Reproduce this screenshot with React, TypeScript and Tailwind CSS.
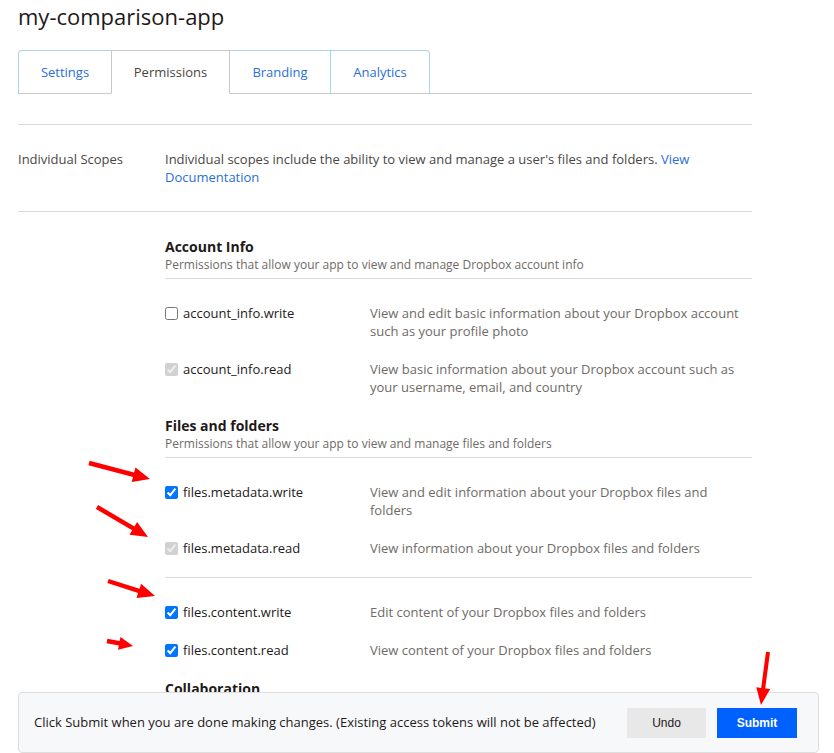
import React from "react";

type Arrow = { x1: number; y1: number; x2: number; y2: number; hl: number; hw: number; sw: number };

function arrowPts(a: Arrow) {
  const dx = a.x2 - a.x1;
  const dy = a.y2 - a.y1;
  const len = Math.hypot(dx, dy);
  const ux = dx / len;
  const uy = dy / len;
  const nx = -uy;
  const ny = ux;
  const bx = a.x2 - ux * a.hl;
  const by = a.y2 - uy * a.hl;
  const p = [
    [a.x1 + (nx * a.sw) / 2, a.y1 + (ny * a.sw) / 2],
    [bx + (nx * a.sw) / 2, by + (ny * a.sw) / 2],
    [bx + (nx * a.hw) / 2, by + (ny * a.hw) / 2],
    [a.x2, a.y2],
    [bx - (nx * a.hw) / 2, by - (ny * a.hw) / 2],
    [bx - (nx * a.sw) / 2, by - (ny * a.sw) / 2],
    [a.x1 - (nx * a.sw) / 2, a.y1 - (ny * a.sw) / 2],
  ];
  return p.map((q) => q.map((v) => v.toFixed(1)).join(",")).join(" ");
}

const arrows: Arrow[] = [
  { x1: 89, y1: 463, x2: 150, y2: 479, hl: 17, hw: 15, sw: 4.5 },
  { x1: 97, y1: 507, x2: 148, y2: 537, hl: 17, hw: 15, sw: 4.5 },
  { x1: 108, y1: 581, x2: 155, y2: 596, hl: 17, hw: 15, sw: 4.5 },
  { x1: 107, y1: 641, x2: 133, y2: 646, hl: 14, hw: 13, sw: 4.5 },
  { x1: 768, y1: 652, x2: 761, y2: 705, hl: 17, hw: 14, sw: 4 },
];

type Scope = { name: string; desc: string; checked: boolean; disabled: boolean };

function ScopeRow({ s }: { s: Scope }) {
  return (
    <div className="flex items-start">
      <label className="flex w-[205px] shrink-0 items-center gap-[5px] text-[13px] leading-[18px] text-[#1e1919]">
        <input
          type="checkbox"
          className="m-0 h-[13px] w-[13px] shrink-0"
          defaultChecked={s.checked}
          disabled={s.disabled}
        />
        <span>{s.name}</span>
      </label>
      <div className="w-[375px] text-[13px] leading-[18px] text-[#6f6a66]">{s.desc}</div>
    </div>
  );
}

function Section({
  title,
  subtitle,
  groups,
}: {
  title: string;
  subtitle: string;
  groups: Scope[][];
}) {
  return (
    <div className="mb-px">
      <div className="text-[14px] font-bold leading-[18px] text-[#1e1919]">{title}</div>
      <div className="pb-[5px] text-[12px] leading-[17px] text-[#6f6a66]">{subtitle}</div>
      {groups.map((g, gi) => (
        <div key={gi} className="border-t border-[#d9d9d9] pb-[20px] pt-[25px]">
          <div className="flex flex-col gap-[20px]">
            {g.map((s) => (
              <ScopeRow key={s.name} s={s} />
            ))}
          </div>
        </div>
      ))}
    </div>
  );
}

export default function App() {
  return (
    <div
      className="relative min-h-[900px] bg-white"
      style={{ fontFamily: '"Open Sans", "Noto Sans", sans-serif' }}
    >
      <div className="w-[752px] pl-[18px]">
        <h1 className="pt-[1px] text-[22px] leading-[30px] text-[#1e1919]">my-comparison-app</h1>
        <div className="mt-[19px] flex border-b border-[#c9c9c9] text-[13px]">
          <div className="flex h-[43px] w-[93px] items-center justify-center rounded-tl-[4px] border-l border-t border-[#a9d3f7] pt-[2px] text-[#2a6fd6]">
            Settings
          </div>
          <div className="-mb-px flex h-[44px] w-[119px] items-center justify-center border-x border-t border-b border-[#c9c9c9] border-b-white bg-white pt-[1px] text-[#4a4644]">
            Permissions
          </div>
          <div className="flex h-[43px] w-[100px] items-center justify-center border-t border-[#a9d3f7] pt-[2px] text-[#2a6fd6]">
            Branding
          </div>
          <div className="flex h-[43px] w-[100px] items-center justify-center rounded-tr-[4px] border-x border-t border-[#a9d3f7] pt-[2px] text-[#2a6fd6]">
            Analytics
          </div>
        </div>

        <div className="mt-[30px] border-t border-[#d9d9d9]">
          <div className="flex pb-[25px] pt-[25px] text-[13px] leading-[18px]">
            <div className="w-[147px] shrink-0 text-[#4a4644]">Individual Scopes</div>
            <div className="w-[560px] text-[#4a4644]">
              Individual scopes include the ability to view and manage a user's files and folders.{" "}
              <a className="text-[#2a6fd6]">View Documentation</a>
            </div>
          </div>
        </div>

        <div className="border-t border-[#d9d9d9] pl-[147px] pt-[26px]">
          <Section
            title="Account Info"
            subtitle="Permissions that allow your app to view and manage Dropbox account info"
            groups={[
              [
                {
                  name: "account_info.write",
                  desc: "View and edit basic information about your Dropbox account such as your profile photo",
                  checked: false,
                  disabled: false,
                },
                {
                  name: "account_info.read",
                  desc: "View basic information about your Dropbox account such as your username, email, and country",
                  checked: true,
                  disabled: true,
                },
              ],
            ]}
          />
          <Section
            title="Files and folders"
            subtitle="Permissions that allow your app to view and manage files and folders"
            groups={[
              [
                {
                  name: "files.metadata.write",
                  desc: "View and edit information about your Dropbox files and folders",
                  checked: true,
                  disabled: false,
                },
                {
                  name: "files.metadata.read",
                  desc: "View information about your Dropbox files and folders",
                  checked: true,
                  disabled: true,
                },
              ],
              [
                {
                  name: "files.content.write",
                  desc: "Edit content of your Dropbox files and folders",
                  checked: true,
                  disabled: false,
                },
                {
                  name: "files.content.read",
                  desc: "View content of your Dropbox files and folders",
                  checked: true,
                  disabled: false,
                },
              ],
            ]}
          />
          <Section
            title="Collaboration"
            subtitle="Permissions that allow your app to view and manage sharing and collaboration"
            groups={[
              [
                {
                  name: "sharing.write",
                  desc: "View and manage your Dropbox sharing settings and collaborators",
                  checked: false,
                  disabled: false,
                },
                {
                  name: "sharing.read",
                  desc: "View your Dropbox sharing settings and collaborators",
                  checked: false,
                  disabled: false,
                },
              ],
            ]}
          />
        </div>
      </div>

      <div className="fixed left-[18px] top-[692px] flex h-[61px] w-[801px] items-center justify-between rounded-[4px] border border-[#dedede] bg-[#f7f8fa] pl-[15px] pr-[21px]">
        <div className="text-[13px] text-[#1e1919]">
          Click Submit when you are done making changes. (Existing access tokens will not be affected)
        </div>
        <div className="flex gap-[11px]" style={{ fontFamily: '"Liberation Sans", Arial, sans-serif' }}>
          <button className="h-[30px] w-[79px] bg-[#e8e8e8] text-[12px] text-[#1e1919]">Undo</button>
          <button className="h-[30px] w-[80px] bg-[#0061fe] text-[12px] font-bold text-white">Submit</button>
        </div>
      </div>

      <svg className="pointer-events-none fixed left-0 top-0" width="834" height="753">
        {arrows.map((a, i) => (
          <polygon key={i} points={arrowPts(a)} fill="#ff0000" />
        ))}
      </svg>
    </div>
  );
}
